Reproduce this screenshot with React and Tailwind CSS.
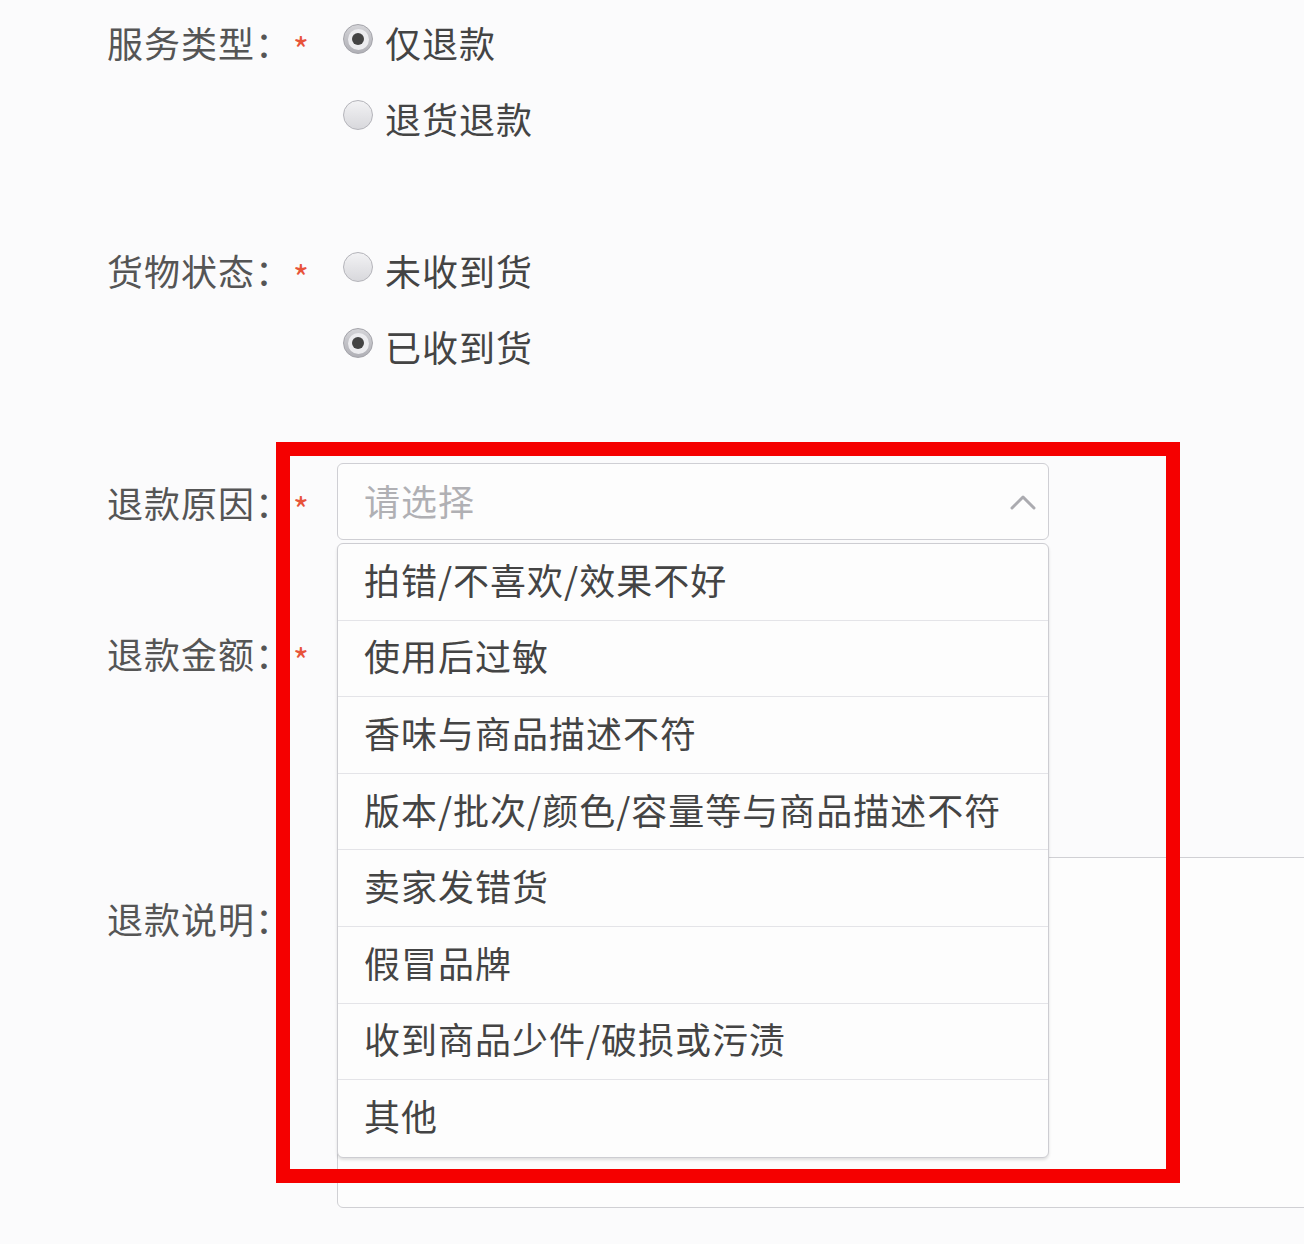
import React from 'react'

const font = { fontFamily: '"Noto Sans CJK SC", "Noto Sans", sans-serif' }

const reasons = [
  '拍错/不喜欢/效果不好',
  '使用后过敏',
  '香味与商品描述不符',
  '版本/批次/颜色/容量等与商品描述不符',
  '卖家发错货',
  '假冒品牌',
  '收到商品少件/破损或污渍',
  '其他',
]

function Radio({ checked, label }) {
  return (
    <div className="h-[76px] flex items-center">
      <span
        className={
          checked
            ? 'ml-[6px] mb-[6px] w-[30px] h-[30px] rounded-full flex items-center justify-center bg-gradient-to-b from-[#d4d4d8] to-[#b0b0b6] border border-[#a4a4aa]'
            : 'ml-[6px] mb-[6px] w-[30px] h-[30px] rounded-full bg-gradient-to-b from-[#f2f2f4] to-[#d8d8dc] border border-[#b4b4ba]'
        }
      >
        {checked && (
          <span className="w-[21px] h-[21px] rounded-full bg-[#ececef] flex items-center justify-center">
            <span className="w-[12px] h-[12px] rounded-full bg-[#444]" />
          </span>
        )}
      </span>
      <span className="ml-[12px] text-[36px] leading-none tracking-[1px] text-[#444]">{label}</span>
    </div>
  )
}

function Label({ text, required }) {
  return (
    <div className="flex items-center shrink-0">
      <span className="w-[186px] text-[36px] leading-none tracking-[1px] text-[#555]">{text}</span>
      <span className="w-[44px] text-[34px] leading-none text-[#e8533a] translate-y-[7px]">{required ? '*' : ''}</span>
    </div>
  )
}

export default function App() {
  return (
    <div className="relative min-h-[1244px] w-[1304px] overflow-hidden bg-[#fbfbfc] pl-[107px] pt-[4px]" style={font}>
      {/* 服务类型 */}
      <div className="flex items-start">
        <div className="h-[76px] flex items-center">
          <Label text="服务类型：" required />
        </div>
        <div className="flex flex-col">
          <Radio checked label="仅退款" />
          <Radio label="退货退款" />
        </div>
      </div>

      {/* 货物状态 */}
      <div className="flex items-start mt-[76px]">
        <div className="h-[76px] flex items-center">
          <Label text="货物状态：" required />
        </div>
        <div className="flex flex-col">
          <Radio label="未收到货" />
          <Radio checked label="已收到货" />
        </div>
      </div>

      {/* 退款原因 */}
      <div className="flex items-center mt-[79px] h-[77px]">
        <Label text="退款原因：" required />
        <div className="relative w-[712px] h-[77px] z-10">
          <div className="h-full rounded-md border border-[#cfcfd4] bg-[#fdfdfd] flex items-center justify-between pl-[26px] pr-[12px]">
            <span className="text-[36px] leading-none tracking-[1px] text-[#b0b0b4] -translate-y-[2px]">请选择</span>
            <svg width="26" height="16" viewBox="0 0 26 16" fill="none">
              <polyline points="2,14 13,3 24,14" stroke="#ababb0" strokeWidth="3" strokeLinecap="round" strokeLinejoin="round" />
            </svg>
          </div>
          <div className="absolute left-0 top-[80px] w-full rounded-md border border-[#cdcdd2] bg-[#fdfdfd] shadow-[0_2px_3px_rgba(0,0,0,0.12)]">
            {reasons.map((r, i) => (
              <div
                key={r}
                className={
                  i < reasons.length - 1
                    ? 'h-[76.6px] flex items-center pl-[26px] border-b border-[#e4e4e8]'
                    : 'h-[76.6px] flex items-center pl-[26px]'
                }
              >
                <span className="text-[36px] leading-none tracking-[1px] text-[#444] -translate-y-[3px]">{r}</span>
              </div>
            ))}
          </div>
        </div>
      </div>

      {/* 退款金额 */}
      <div className="flex items-center mt-[75px] h-[76px]">
        <Label text="退款金额：" required />
        <div className="w-[712px] h-[76px] rounded-md border border-[#d4d4d8] bg-[#fdfdfd]" />
      </div>

      {/* 退款说明 */}
      <div className="flex items-start mt-[166px]">
        <div className="pt-[43px]">
          <Label text="退款说明：" />
        </div>
        <div className="w-[1000px] h-[351px] shrink-0 rounded-md border border-[#d0d0d4] bg-[#fdfdfd]" />
      </div>

      {/* annotation frame */}
      <div className="absolute left-[276px] top-[442px] w-[904px] h-[741px] border-[14px] border-[#f50000] z-20 pointer-events-none" />
    </div>
  )
}
